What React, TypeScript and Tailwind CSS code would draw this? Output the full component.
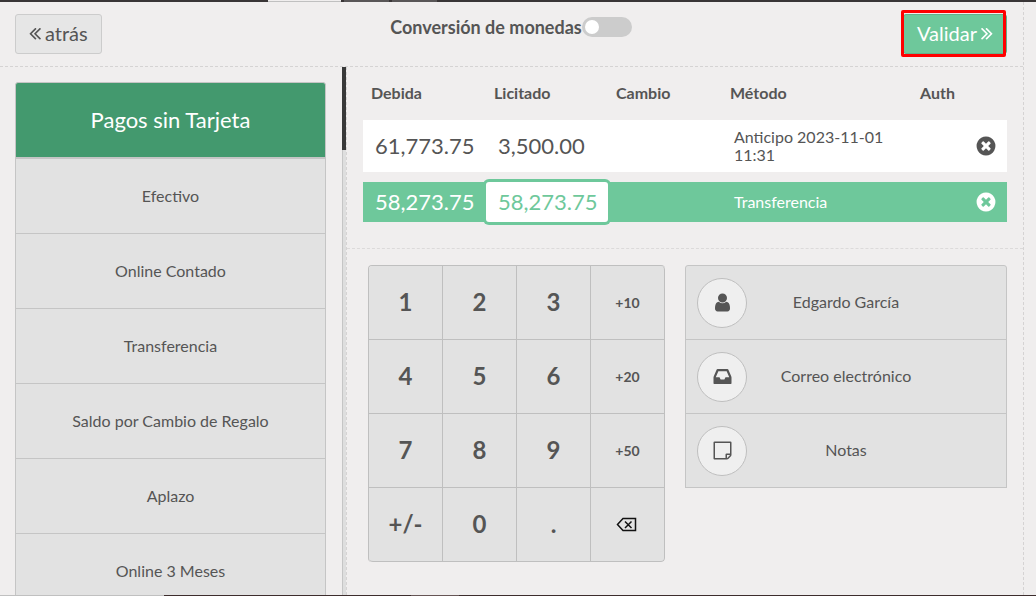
import React, { useState } from "react";

const methods = [
  "Efectivo",
  "Online Contado",
  "Transferencia",
  "Saldo por Cambio de Regalo",
  "Aplazo",
  "Online 3 Meses",
];

const keys = [
  "1", "2", "3", "+10",
  "4", "5", "6", "+20",
  "7", "8", "9", "+50",
  "+/-", "0", ".", "back",
];

const paths = {
  left: "M1011 1376q0 13-10 23l-50 50q-10 10-23 10t-23-10l-466-466q-10-10-10-23t10-23l466-466q10-10 23-10t23 10l50 50q10 10 10 23t-10 23l-393 393 393 393q10 10 10 23zm384 0q0 13-10 23l-50 50q-10 10-23 10t-23-10l-466-466q-10-10-10-23t10-23l466-466q10-10 23-10t23 10l50 50q10 10 10 23t-10 23l-393 393 393 393q10 10 10 23z",
  right:
    "M979 960q0 13-10 23l-466 466q-10 10-23 10t-23-10l-50-50q-10-10-10-23t10-23l393-393-393-393q-10-10-10-23t10-23l50-50q10-10 23-10t23 10l466 466q10 10 10 23zm384 0q0 13-10 23l-466 466q-10 10-23 10t-23-10l-50-50q-10-10-10-23t10-23l393-393-393-393q-10-10-10-23t10-23l50-50q10-10 23-10t23 10l466 466q10 10 10 23z",
  remove:
    "M1277 1122q0-26-19-45l-181-181 181-181q19-19 19-45 0-27-19-46l-90-90q-19-19-46-19-26 0-45 19l-181 181-181-181q-19-19-45-19-27 0-46 19l-90 90q-19 19-19 46 0 26 19 45l181 181-181 181q-19 19-19 45 0 27 19 46l90 90q19 19 46 19 26 0 45-19l181-181 181 181q19 19 45 19 27 0 46-19l90-90q19-19 19-46zm387-226q0 209-103 385.5t-279.5 279.5-385.5 103-385.5-103-279.5-279.5-103-385.5 103-385.5 279.5-279.5 385.5-103 385.5 103 279.5 279.5 103 385.5z",
  user: "M1536 1399q0 109-62.5 187t-150.5 78h-854q-88 0-150.5-78t-62.5-187q0-85 8.5-160.5t31.5-152 58.5-131 94-89 134.5-34.5q131 128 313 128t313-128q76 0 134.5 34.5t94 89 58.5 131 31.5 152 8.5 160.5zm-256-887q0 159-112.5 271.5t-271.5 112.5-271.5-112.5-112.5-271.5 112.5-271.5 271.5-112.5 271.5 112.5 112.5 271.5z",
  inbox:
    "M1151 960h316q-1-3-2.5-8.5t-2.5-7.5l-212-496h-708l-212 496q-1 3-2.5 8.5t-2.5 7.5h316l95 192h320zm513 30v482q0 26-19 45t-45 19h-1408q-26 0-45-19t-19-45v-482q0-62 25-123l238-552q10-25 36.5-42t52.5-17h832q26 0 52.5 17t36.5 42l238 552q25 61 25 123z",
  note: "M1528 1280h-248v248q29-10 41-22l185-185q12-12 22-41zm-280-128h288v-896h-1280v1280h896v-288q0-40 28-68t68-28zm416-928v1024q0 40-20 88t-48 76l-184 184q-28 28-76 48t-88 20h-1024q-40 0-68-28t-28-68v-1344q0-40 28-68t68-28h1344q40 0 68 28t28 68z",
};

const Icon = ({ name, className }: { name: keyof typeof paths; className: string }) => (
  <svg viewBox="0 0 1792 1792" fill="currentColor" className={className} aria-hidden="true">
    <path d={paths[name]} />
  </svg>
);

const AngleIcon = ({ name }: { name: "left" | "right" }) => (
  <svg viewBox="384 0 1024 1792" fill="currentColor" className="h-[22px] w-3" aria-hidden="true">
    <path d={paths[name]} />
  </svg>
);

const BackspaceIcon = () => (
  <svg
    width="24"
    height="16"
    viewBox="0 0 24 16"
    fill="none"
    stroke="#111"
    strokeWidth="1.5"
    aria-hidden="true">
    <path d="M7 1.5h12.5v12H7L1.5 7.5z" />
    <path d="M9 4.5l6.5 6.5M15.5 4.5L9 11" />
  </svg>
);

const actions: { icon: keyof typeof paths; label: string }[] = [
  { icon: "user", label: "Edgardo García" },
  { icon: "inbox", label: "Correo electrónico" },
  { icon: "note", label: "Notas" },
];

const TopEdge = () => (
  <div className="flex h-[2px] shrink-0 bg-[#393536]">
    <div className="w-[268px]" />
    <div className="w-[73px] border-b border-[#c0c0c0] bg-[#f0eeee]" />
    <div className="w-[3px]" />
    <div className="w-[45px] bg-[#595657]" />
    <div className="w-[3px]" />
    <div className="w-[45px] bg-[#595657]" />
  </div>
);

const Header = () => {
  const [convert, setConvert] = useState(false);

  return (
    <header className="grid h-[65px] shrink-0 grid-cols-[1fr_auto_1fr] items-start border-b border-dashed border-[#d5d3d3] pt-3 pr-4 pl-[15px]">
      <button className="flex h-10 items-center gap-1 justify-self-start rounded-[3px] border border-[#ccc] bg-[#e6e6e6] px-[13px] pb-0.5 text-xl">
        <AngleIcon name="left" />
        atrás
      </button>
      <label className="flex cursor-pointer items-center pt-[3px] text-lg leading-5 font-bold">
        Conversión de monedas
        <input
          type="checkbox"
          checked={convert}
          onChange={(e) => setConvert(e.target.checked)}
          className="peer sr-only"
        />
        <span className="flex h-5 w-[50px] items-center rounded-full bg-[#ccc] px-[3px] peer-checked:justify-end peer-checked:bg-[#6ec89b]">
          <span className="size-[14px] rounded-full bg-white" />
        </span>
      </label>
      <div className="relative justify-self-end">
        <button className="flex h-10 items-center gap-1 rounded-[3px] border border-[#64af8a] bg-[#6ec89b] px-[13px] pb-0.5 text-xl text-white">
          Validar
          <AngleIcon name="right" />
        </button>
        <div className="pointer-events-none absolute -top-1 right-px -bottom-[3px] -left-[2px] rounded-xs border-3 border-[#f00]" />
      </div>
    </header>
  );
};

const Sidebar = () => (
  <aside className="flex w-[347px] shrink-0 overflow-hidden border-r border-dashed border-[#d5d3d3]">
    <div className="flex flex-1 flex-col pt-[15px] pr-4 pl-[15px]">
      <h2 className="flex h-[76px] shrink-0 items-center justify-center rounded-t-[3px] border border-[#c5c5c5] bg-[#43996e] pb-0.5 text-[22px] text-white">
        Pagos sin Tarjeta
      </h2>
      {methods.map((method) => (
        <button
          key={method}
          className="-mb-px h-[76px] shrink-0 border border-[#c5c5c5] bg-[#e2e2e2] text-base">
          {method}
        </button>
      ))}
    </div>
    {/* Scroll bar */}
    <div className="w-1 border-l border-[#c5c5c5] bg-[#dedede]">
      <div className="-ml-px h-[83px] w-1 bg-[#393939]" />
    </div>
  </aside>
);

const RemoveButton = () => (
  <button aria-label="Eliminar" className="block">
    <Icon name="remove" className="size-[22px]" />
  </button>
);

const PaymentLines = () => (
  <section className="h-[182px] shrink-0 border-b border-dashed border-[#dcdada] px-4">
    <table className="w-full table-fixed border-separate border-spacing-0 text-left">
      <colgroup>
        <col className="w-[123px]" />
        <col className="w-[122px]" />
        <col className="w-[114px]" />
        <col className="w-[190px]" />
        <col />
        <col className="w-[42px]" />
      </colgroup>
      <thead>
        <tr className="h-[53px] text-base">
          <th className="px-2 pb-0.5 font-bold">Debida</th>
          <th className="px-2 pb-0.5 font-bold">Licitado</th>
          <th className="px-2 pb-0.5 font-bold">Cambio</th>
          <th className="px-2 pb-0.5 font-bold">Método</th>
          <th className="px-2 pb-0.5 font-bold">Auth</th>
          <th />
        </tr>
      </thead>
      <tbody>
        <tr className="h-[52px] bg-white">
          <td className="px-3 pb-0.5 text-[22px]">61,773.75</td>
          <td className="px-3 pb-0.5 text-[22px]">3,500.00</td>
          <td />
          <td className="px-3 text-base leading-[18px]">Anticipo 2023-11-01 11:31</td>
          <td />
          <td className="px-[10px]">
            <RemoveButton />
          </td>
        </tr>
        <tr className="h-[10px]">
          <td colSpan={6} />
        </tr>
        <tr className="h-10 bg-[#6ec89b] text-white">
          <td className="px-3 pb-0.5 text-[22px]">58,273.75</td>
          <td className="h-10 p-0">
            <div className="flex h-10 items-center rounded-[3px] bg-white px-3 pb-0.5 text-[22px] text-[#6ec89b] ring-3 ring-[#6ec89b]">
              58,273.75
            </div>
          </td>
          <td />
          <td className="px-3 text-base">Transferencia</td>
          <td />
          <td className="px-[10px]">
            <RemoveButton />
          </td>
        </tr>
      </tbody>
    </table>
  </section>
);

const Numpad = () => (
  <div className="grid shrink-0 grid-cols-[repeat(4,74px)] overflow-hidden rounded-[4px] border-t border-l border-[#bfbfbf]">
    {keys.map((key, index) => (
      <button
        key={key}
        aria-label={key === "back" ? "Borrar" : undefined}
        className={`flex h-[74px] items-center justify-center border-r border-b border-[#bfbfbf] bg-[#e2e2e2] font-bold ${
          index % 4 === 3 ? "text-sm" : "pb-0.5 text-2xl"
        } ${index === 15 ? "rounded-br-[4px]" : ""} ${index === 3 ? "rounded-tr-[4px]" : ""} ${
          index === 12 ? "rounded-bl-[4px]" : ""
        }`}>
        {key === "back" ? <BackspaceIcon /> : key}
      </button>
    ))}
  </div>
);

const Actions = () => (
  <div className="flex flex-1 flex-col">
    {actions.map(({ icon, label }) => (
      <button
        key={label}
        className="-mb-px grid h-[75px] grid-cols-[50px_1fr_50px] items-center border border-[#c5c5c5] bg-[#e2e2e2] px-[11px] text-base first:rounded-t-[3px]">
        <span className="flex size-[50px] items-center justify-center rounded-full border border-[#bfbfbf] bg-[#efefef]">
          <Icon name={icon} className="size-[21px]" />
        </span>
        <span className="pb-0.5">{label}</span>
      </button>
    ))}
  </div>
);

const App = () => {
  return (
    <div className="flex h-screen flex-col overflow-hidden bg-[#f0eeee] font-['Lato',sans-serif] text-[#555]">
      <TopEdge />
      <div className="mr-3 flex min-h-0 flex-1 flex-col border-r border-dashed border-[#d5d3d3]">
        <Header />
        <div className="flex min-h-0 flex-1">
          <Sidebar />
          <main className="flex min-w-0 flex-1 flex-col">
            <PaymentLines />
            <div className="flex items-start gap-5 pt-4 pr-4 pl-[21px]">
              <Numpad />
              <Actions />
            </div>
          </main>
        </div>
      </div>
      <div className="flex h-px shrink-0 bg-[#3d2d2d]">
        <div className="w-[164px] bg-[#c0c0c0]" />
        <div className="w-[247px]" />
        <div className="w-12 bg-[#665555]" />
      </div>
    </div>
  );
};

export default App;
